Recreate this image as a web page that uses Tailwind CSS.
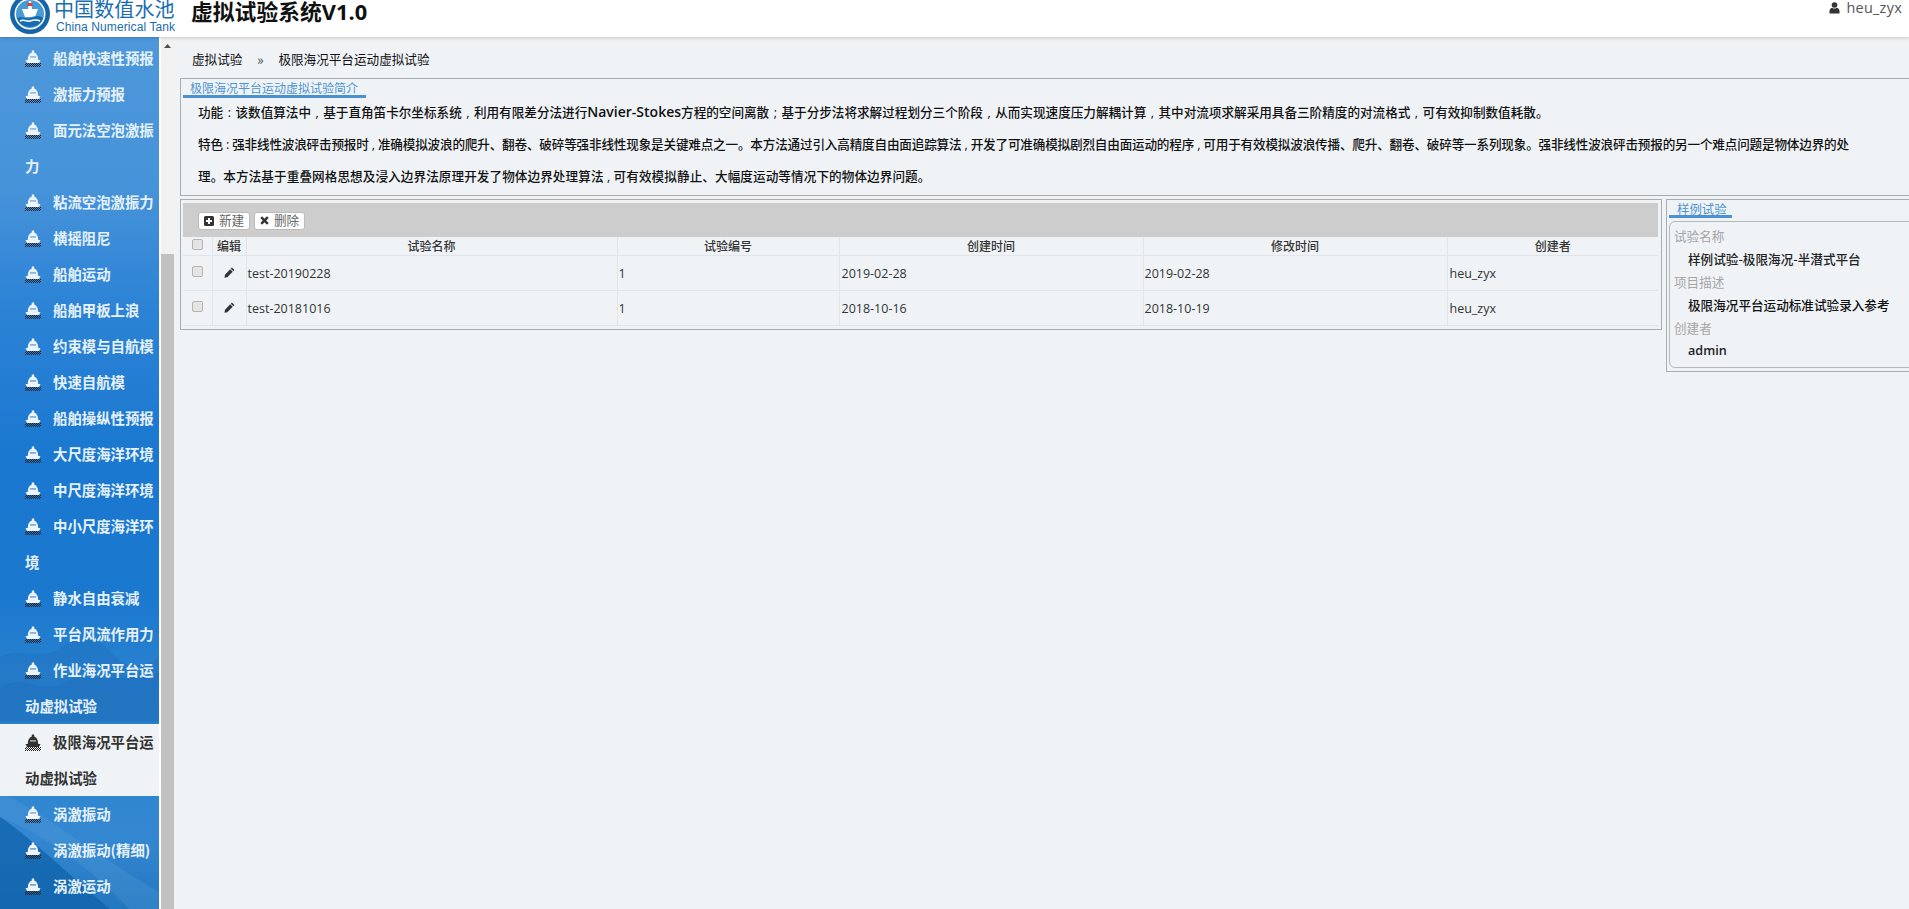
<!DOCTYPE html>
<html lang="zh-CN">
<head>
<meta charset="utf-8">
<title>虚拟试验系统</title>
<script src="https://cdn.jsdelivr.net/npm/@tailwindcss/browser@4"></script>
</head>
<body class="w-[1909px] h-[909px] overflow-hidden bg-[#eff3f6] font-['Open_Sans','Noto_Sans_CJK_SC',sans-serif] text-[#222]">
<svg width="0" height="0" class="absolute">
  <defs>
    <pattern id="dith" width="2" height="2" patternUnits="userSpaceOnUse"><rect width="1" height="1" fill="currentColor"/><rect x="1" y="1" width="1" height="1" fill="currentColor"/></pattern>
    <symbol id="ship" viewBox="0 0 16 17">
      <rect x="6.800" y="0.500" width="2.400" height="2.500" fill="currentColor"/>
      <path fill="currentColor" fill-rule="evenodd" d="M2.800 10C2.800 5 5 2.500 8 2.500S13.200 5 13.200 10zM5 6v1.400h6V6z"/>
      <path fill="currentColor" fill-opacity=".45" d="M5 6h6v1.400H5z"/>
      <path fill="currentColor" d="M0.500 10h15l-1.500 3H2z"/>
      <rect x="0" y="13" width="16" height="4" fill="url(#dith)"/>
    </symbol>
  </defs>
</svg>

<header class="h-[37px] bg-white flex items-start relative z-10 shadow-[0_1px_3px_rgba(0,0,0,0.18)] overflow-hidden">
  <div class="w-[54px] h-[37px] flex justify-center pl-[6px] shrink-0">
    <svg width="40" height="40" viewBox="0 0 40 40" class="-mt-[6px]">
      <circle cx="20" cy="20" r="20" fill="#1565a8"/>
      <circle cx="20" cy="20" r="15.500" fill="#fff"/>
      <circle cx="20" cy="20" r="14" fill="#4a9ad4"/>
      <path d="M19 7h2l1 8h6l-3 8H15l-3-8h6z" fill="#fff"/>
      <path d="M17.500 9h5v3h-5z" fill="#d8443c"/>
      <path d="M7 24c5-3 9 2 13 0s9-3 13 0c-1 5-7 9-13 9S8 29 7 24z" fill="#1a6cb0"/>
      <path d="M10 27c4-2 7 1 10 0s6-2 10 0" stroke="#fff" stroke-width="1.500" fill="none"/>
    </svg>
  </div>
  <div class="w-[137px] shrink-0 text-[#1a6cb0]">
    <div class="text-[20px] leading-[20px] tracking-[0.1px] -mt-[1px] whitespace-nowrap font-['Noto_Sans_CJK_SC',sans-serif]">中国数值水池</div>
    <div class="text-[12px] leading-[14px] mt-[1px] ml-[2px] whitespace-nowrap font-['Liberation_Sans',sans-serif] tracking-[0.1px]">China Numerical Tank</div>
  </div>
  <div class="text-[21.8px] leading-[21px] font-bold text-[#111] whitespace-nowrap font-['Noto_Sans_CJK_SC',sans-serif]">虚拟试验系统<span class="font-['Open_Sans',sans-serif]">V1.0</span></div>
  <div class="ml-auto flex items-center gap-[6px] pr-[7px] h-[16px] text-[#555] text-[14.4px] leading-[16px] tracking-[0.3px]">
    <svg width="11" height="12" viewBox="0 0 10 12" fill="#333"><circle cx="5" cy="3" r="2.800"/><path d="M0 11.500V9c0-2 1.500-3 2.800-3.200C3.500 6.400 4.200 6.600 5 6.600s1.500-.2 2.200-.8C8.500 6 10 7 10 9v2.500z"/></svg>
    <span>heu_zyx</span>
  </div>
</header>

<div class="flex h-[872px] overflow-hidden">
  <aside class="relative w-[159px] shrink-0 overflow-hidden bg-[linear-gradient(180deg,#4d98da_0px,#4793d9_150px,#2e84d6_260px,#1a78d0_420px,#1a78cf_560px,#2a82cf_640px,#2f85cf_730px,#3488d2_800px,#2377bf_872px)]">
    <svg class="absolute left-0 top-[580px]" width="159" height="292" viewBox="0 0 159 292" aria-hidden="true">
      <path d="M0 40C20 28 40 46 62 30s34-12 50 6 30 14 47 4v64H0z" fill="#1b6bb5" fill-opacity=".3"/>
      <path d="M0 70c24-14 40 8 64-4s42 2 95-10v50H0z" fill="#0f5ea8" fill-opacity=".2"/>
      <path d="M0 200c30 20 60 50 110 92H0z" fill="#0f63ab" fill-opacity=".75"/>
      <path d="M0 175c40 18 90 60 159 100v17h-30C90 250 40 215 0 200z" fill="#5aa0da" fill-opacity=".25"/>
    </svg>
    <nav class="relative pt-[3px] pl-[25px] text-[14.4px] leading-[36px] font-bold text-[#e6f1fa] font-['Noto_Sans_CJK_SC',sans-serif] whitespace-nowrap">
      <div class="flex items-center gap-[12px] h-[36px]"><svg class="w-[16px] h-[17px] text-[#eef4fa]"><use href="#ship"/></svg>船舶快速性预报</div>
      <div class="flex items-center gap-[12px] h-[36px]"><svg class="w-[16px] h-[17px] text-[#eef4fa]"><use href="#ship"/></svg>激振力预报</div>
      <div class="flex items-center gap-[12px] h-[36px]"><svg class="w-[16px] h-[17px] text-[#eef4fa]"><use href="#ship"/></svg>面元法空泡激振</div>
      <div class="h-[36px]">力</div>
      <div class="flex items-center gap-[12px] h-[36px]"><svg class="w-[16px] h-[17px] text-[#eef4fa]"><use href="#ship"/></svg>粘流空泡激振力</div>
      <div class="flex items-center gap-[12px] h-[36px]"><svg class="w-[16px] h-[17px] text-[#eef4fa]"><use href="#ship"/></svg>横摇阻尼</div>
      <div class="flex items-center gap-[12px] h-[36px]"><svg class="w-[16px] h-[17px] text-[#eef4fa]"><use href="#ship"/></svg>船舶运动</div>
      <div class="flex items-center gap-[12px] h-[36px]"><svg class="w-[16px] h-[17px] text-[#eef4fa]"><use href="#ship"/></svg>船舶甲板上浪</div>
      <div class="flex items-center gap-[12px] h-[36px]"><svg class="w-[16px] h-[17px] text-[#eef4fa]"><use href="#ship"/></svg>约束模与自航模</div>
      <div class="flex items-center gap-[12px] h-[36px]"><svg class="w-[16px] h-[17px] text-[#eef4fa]"><use href="#ship"/></svg>快速自航模</div>
      <div class="flex items-center gap-[12px] h-[36px]"><svg class="w-[16px] h-[17px] text-[#eef4fa]"><use href="#ship"/></svg>船舶操纵性预报</div>
      <div class="flex items-center gap-[12px] h-[36px]"><svg class="w-[16px] h-[17px] text-[#eef4fa]"><use href="#ship"/></svg>大尺度海洋环境</div>
      <div class="flex items-center gap-[12px] h-[36px]"><svg class="w-[16px] h-[17px] text-[#eef4fa]"><use href="#ship"/></svg>中尺度海洋环境</div>
      <div class="flex items-center gap-[12px] h-[36px]"><svg class="w-[16px] h-[17px] text-[#eef4fa]"><use href="#ship"/></svg>中小尺度海洋环</div>
      <div class="h-[36px]">境</div>
      <div class="flex items-center gap-[12px] h-[36px]"><svg class="w-[16px] h-[17px] text-[#eef4fa]"><use href="#ship"/></svg>静水自由衰减</div>
      <div class="flex items-center gap-[12px] h-[36px]"><svg class="w-[16px] h-[17px] text-[#eef4fa]"><use href="#ship"/></svg>平台风流作用力</div>
      <div class="flex items-center gap-[12px] h-[36px]"><svg class="w-[16px] h-[17px] text-[#eef4fa]"><use href="#ship"/></svg>作业海况平台运</div>
      <div class="h-[36px]">动虚拟试验</div>
      <div class="-ml-[25px] pl-[25px] bg-[#eff3f6] text-[#333]">
        <div class="flex items-center gap-[12px] h-[36px]"><svg class="w-[16px] h-[17px] text-[#333]"><use href="#ship"/></svg>极限海况平台运</div>
        <div class="h-[36px]">动虚拟试验</div>
      </div>
      <div class="flex items-center gap-[12px] h-[36px]"><svg class="w-[16px] h-[17px] text-[#eef4fa]"><use href="#ship"/></svg>涡激振动</div>
      <div class="flex items-center gap-[12px] h-[36px]"><svg class="w-[16px] h-[17px] text-[#eef4fa]"><use href="#ship"/></svg>涡激振动(精细)</div>
      <div class="flex items-center gap-[12px] h-[36px]"><svg class="w-[16px] h-[17px] text-[#eef4fa]"><use href="#ship"/></svg>涡激运动</div>
    </nav>
  </aside>

  <div class="w-[2px] bg-white shrink-0"></div>
  <div class="w-[13px] shrink-0 bg-[#f1f1f1] flex flex-col">
    <div class="h-[217px] shrink-0 flex justify-center pt-[7px]">
      <svg width="7" height="4" viewBox="0 0 7 4"><path d="M3.500 0L7 4H0z" fill="#505050"/></svg>
    </div>
    <div class="flex-1 bg-[#c1c1c1]"></div>
  </div>

  <main class="flex-1 min-w-0 pl-[6px] overflow-hidden">
    <div class="h-[41px] flex items-center pl-[12px] text-[12.6px] text-[#111] whitespace-nowrap font-['Noto_Sans_CJK_SC',sans-serif] pt-[3px]">
      <span>虚拟试验</span><span class="w-[36px] text-center text-[14px] leading-[14px] text-[#444]">»</span><span>极限海况平台运动虚拟试验</span>
    </div>

    <section class="border border-[#a9adb0] border-r-0 h-[118px] w-[1740px] font-medium text-[#111] whitespace-nowrap">
      <div class="ml-[2px] w-[183px] h-[19px] border-b-[3px] border-[#4a90d2] pl-[7px] text-[12px] leading-[17px] font-normal text-[#4f94d4]"><span class="font-['Noto_Sans_CJK_SC',sans-serif]">极限海况平台运动虚拟试验简介</span></div>
      <div class="-mt-[2px] pl-[17px] text-[12.6px] leading-[32px]">
        <p class="[word-spacing:1.200px]">功能 : 该数值算法中 , 基于直角笛卡尔坐标系统 , 利用有限差分法进行<b class="font-semibold text-[14px]">Navier-Stokes</b>方程的空间离散 ; 基于分步法将求解过程划分三个阶段 , 从而实现速度压力解耦计算 , 其中对流项求解采用具备三阶精度的对流格式 , 可有效抑制数值耗散。</p>
        <p class="[letter-spacing:-0.18px]">特色 : 强非线性波浪砰击预报时 , 准确模拟波浪的爬升、翻卷、破碎等强非线性现象是关键难点之一。本方法通过引入高精度自由面追踪算法 , 开发了可准确模拟剧烈自由面运动的程序 , 可用于有效模拟波浪传播、爬升、翻卷、破碎等一系列现象。强非线性波浪砰击预报的另一个难点问题是物体边界的处</p>
        <p class="tracking-[0.08px]">理。本方法基于重叠网格思想及浸入边界法原理开发了物体边界处理算法 , 可有效模拟静止、大幅度运动等情况下的物体边界问题。</p>
      </div>
    </section>

    <div class="flex items-start gap-[4px] mt-[3px] w-[1740px]">
      <section class="w-[1482px] h-[131px] shrink-0 border border-[#a9adb0] pt-[3px] pl-[2px] pr-[3px]">
        <div class="h-[34px] bg-[#cdcdcd] flex items-center gap-[4px] pl-[15px] pt-[1px] text-[12.6px] text-[#666] font-['Noto_Sans_CJK_SC',sans-serif]">
          <button class="h-[18px] w-[52px] bg-white border border-[#bbb] rounded-[3px] flex items-center justify-center gap-[5px]">
            <svg width="10" height="10" viewBox="0 0 10 10"><path fill="#333" fill-rule="evenodd" d="M1.500 0h7A1.500 1.500 0 0 1 10 1.500v7A1.500 1.500 0 0 1 8.500 10h-7A1.500 1.500 0 0 1 0 8.500v-7A1.500 1.500 0 0 1 1.500 0zM4 2v2H2v2h2v2h2V6h2V4H6V2z"/></svg>新建
          </button>
          <button class="h-[18px] w-[51px] bg-white border border-[#bbb] rounded-[3px] flex items-center justify-center gap-[5px]">
            <svg width="9" height="9" viewBox="0 0 9 9"><path stroke="#333" stroke-width="2.400" d="M1.200 1.200l6.600 6.600M7.800 1.200L1.200 7.800"/></svg>删除
          </button>
        </div>
        <table class="table-fixed border-collapse w-[1475px] text-[12.5px] text-[#333]">
          <colgroup><col class="w-[29px]"><col class="w-[34px]"><col class="w-[371px]"><col class="w-[222px]"><col class="w-[304px]"><col class="w-[304px]"><col class="w-[211px]"></colgroup>
          <thead>
            <tr class="h-[18px] text-[12px] leading-[16px] font-['Noto_Sans_CJK_SC',sans-serif] font-medium text-center">
              <th class="font-medium border-r border-b border-[#dfe5ea]"><span class="flex justify-center -mt-[2px]"><span class="block w-[11px] h-[11px] rounded-[2px] border border-[#b5b5b5] bg-[#e4e4e4]"></span></span></th>
              <th class="font-medium border-r border-b border-[#dfe5ea]">编辑</th>
              <th class="font-medium border-r border-b border-[#dfe5ea]">试验名称</th>
              <th class="font-medium border-r border-b border-[#dfe5ea]">试验编号</th>
              <th class="font-medium border-r border-b border-[#dfe5ea]">创建时间</th>
              <th class="font-medium border-r border-b border-[#dfe5ea]">修改时间</th>
              <th class="font-medium border-b border-[#dfe5ea]">创建者</th>
            </tr>
          </thead>
          <tbody>
            <tr class="h-[35px]">
              <td class="border-r border-b border-[#dfe5ea]"><span class="flex justify-center -mt-[2px]"><span class="block w-[11px] h-[11px] rounded-[2px] border border-[#b5b5b5] bg-[#e4e4e4]"></span></span></td>
              <td class="border-r border-b border-[#dfe5ea]"><span class="flex justify-center"><svg width="11" height="11" viewBox="0 0 10 10"><path fill="#333" d="M7.200.5l2.300 2.300-1 1L6.200 1.500zM5.600 2.100l2.300 2.300L3 9.300.4 9.800l.5-2.700z"/></svg></span></td>
              <td class="pl-[1px] pt-[3px] border-r border-b border-[#dfe5ea]">test-20190228</td>
              <td class="pl-[1px] pt-[3px] border-r border-b border-[#dfe5ea]">1</td>
              <td class="pl-[2px] pt-[3px] border-r border-b border-[#dfe5ea]">2019-02-28</td>
              <td class="pl-[1px] pt-[3px] border-r border-b border-[#dfe5ea]">2019-02-28</td>
              <td class="pl-[2px] pt-[3px] border-b border-[#dfe5ea]">heu_zyx</td>
            </tr>
            <tr class="h-[35px]">
              <td class="border-r border-b border-[#dfe5ea]"><span class="flex justify-center -mt-[2px]"><span class="block w-[11px] h-[11px] rounded-[2px] border border-[#b5b5b5] bg-[#e4e4e4]"></span></span></td>
              <td class="border-r border-b border-[#dfe5ea]"><span class="flex justify-center"><svg width="11" height="11" viewBox="0 0 10 10"><path fill="#333" d="M7.200.5l2.300 2.300-1 1L6.200 1.500zM5.600 2.100l2.300 2.300L3 9.300.4 9.800l.5-2.700z"/></svg></span></td>
              <td class="pl-[1px] pt-[3px] border-r border-b border-[#dfe5ea]">test-20181016</td>
              <td class="pl-[1px] pt-[3px] border-r border-b border-[#dfe5ea]">1</td>
              <td class="pl-[2px] pt-[3px] border-r border-b border-[#dfe5ea]">2018-10-16</td>
              <td class="pl-[1px] pt-[3px] border-r border-b border-[#dfe5ea]">2018-10-19</td>
              <td class="pl-[2px] pt-[3px] border-b border-[#dfe5ea]">heu_zyx</td>
            </tr>
          </tbody>
        </table>
      </section>

      <section class="w-[254px] h-[173px] shrink-0 border border-[#a9adb0] pl-[2px] pr-[2px] text-[12.6px] font-['Noto_Sans_CJK_SC',sans-serif]">
        <div class="w-[63px] h-[18px] border-b-[3px] border-[#4a90d2] pl-[8px] text-[12.4px] leading-[18px] text-[#4f94d4]">样例试验</div>
        <div class="mt-[3px] h-[147px] border border-[#b5b9bc] rounded-[6px] pt-[2px] pl-[4px] leading-[23px]">
          <div class="text-[#a5a5a5]">试验名称</div>
          <div class="pl-[14px] font-medium text-[#222]">样例试验-极限海况-半潜式平台</div>
          <div class="text-[#a5a5a5]">项目描述</div>
          <div class="pl-[14px] font-medium text-[#111]">极限海况平台运动标准试验录入参考</div>
          <div class="text-[#a5a5a5]">创建者</div>
          <div class="pl-[14px] font-semibold text-[#222] font-['Open_Sans',sans-serif]">admin</div>
        </div>
      </section>
    </div>
  </main>
</div>
</body>
</html>
